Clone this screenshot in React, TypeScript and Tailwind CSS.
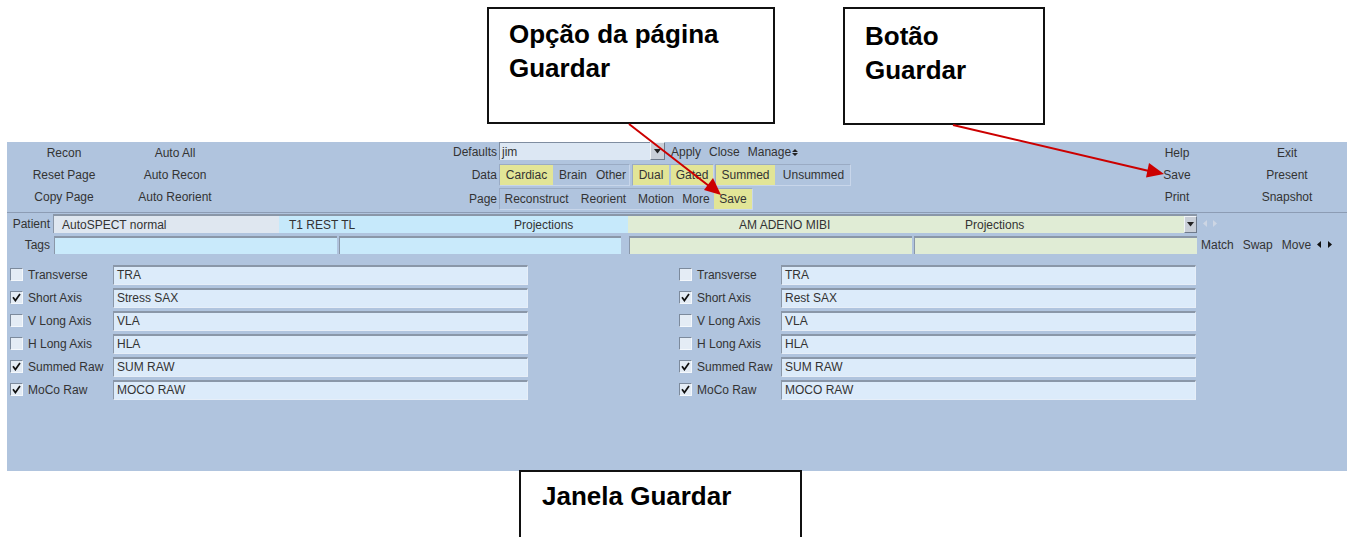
import React from "react";

const Check = () => (
  <svg width="9" height="9" viewBox="0 0 9 9" className="block">
    <path d="M1 4.2 L3.4 7.6 L8 1" fill="none" stroke="#111" strokeWidth="1.7" />
  </svg>
);

const CheckBox = ({ checked }: { checked: boolean }) => (
  <div className="w-[13px] h-[13px] bg-[#e4ecf5] border-t border-l border-t-[#7c8a9c] border-l-[#7c8a9c] border-b border-r border-b-[#f4f8fc] border-r-[#f4f8fc] flex items-center justify-center shrink-0">
    {checked ? <Check /> : null}
  </div>
);

const Field = ({ text, w, bg }: { text: string; w: string; bg: string }) => (
  <div className={`${w} ${bg} h-[20px] border-t-2 border-l border-t-[#8a97a8] border-l-[#8a97a8] border-b border-r border-b-[#e6eef8] border-r-[#e6eef8] pl-[3px] flex items-center`}>
    {text}
  </div>
);

const rows: { label: string; left: string; right: string; lc: boolean; rc: boolean }[] = [
  { label: "Transverse", left: "TRA", right: "TRA", lc: false, rc: false },
  { label: "Short Axis", left: "Stress SAX", right: "Rest SAX", lc: true, rc: true },
  { label: "V Long Axis", left: "VLA", right: "VLA", lc: false, rc: false },
  { label: "H Long Axis", left: "HLA", right: "HLA", lc: false, rc: false },
  { label: "Summed Raw", left: "SUM RAW", right: "SUM RAW", lc: true, rc: true },
  { label: "MoCo Raw", left: "MOCO RAW", right: "MOCO RAW", lc: true, rc: true },
];

const Btn = ({ children, w, y }: { children: React.ReactNode; w: string; y?: boolean }) => (
  <div className={`${w} h-[20px] flex items-center justify-center ${y ? "bg-[#e2e597]" : ""}`}>{children}</div>
);

const groupCls =
  "flex gap-[2px] border border-t-[#9aabc4] border-l-[#9aabc4] border-b-[#c8d6ea] border-r-[#c8d6ea]";

export default function App() {
  return (
    <div className="relative w-[1347px] h-[537px] bg-white overflow-hidden font-['Liberation_Sans',Arial,sans-serif]">
      {/* Application panel */}
      <div className="mt-[142px] ml-[7px] w-[1340px] h-[329px] bg-[#b0c4de] text-[12px] text-[#333333] leading-none">
        {/* Toolbar */}
        <div className="flex h-[70px]">
          <div className="grid grid-cols-[114px_108px] auto-rows-[22px] items-center text-center">
            <div>Recon</div>
            <div>Auto All</div>
            <div>Reset Page</div>
            <div>Auto Recon</div>
            <div>Copy Page</div>
            <div>Auto Reorient</div>
          </div>
          <div className="ml-[211px] flex flex-col">
            <div className="flex h-[22px] items-center">
              <div className="w-[57px] text-right mb-[3px]">Defaults</div>
              <div className="ml-[2px] flex h-[18px] mb-[4px]">
                <div className="w-[151px] h-full bg-[#dce7f3] border-t border-l border-[#7f8da0] pl-[2px] flex items-center">jim</div>
                <div className="w-[15px] h-full bg-[#c9cfd8] border border-t-[#f0f4f8] border-l-[#f0f4f8] border-b-[#6e7a8a] border-r-[#6e7a8a] flex items-center justify-center">
                  <svg width="7" height="5" viewBox="0 0 7 5"><path d="M0 0 H7 L3.5 4.5 Z" fill="#222" /></svg>
                </div>
              </div>
              <div className="ml-[6px] mb-[3px]">Apply</div>
              <div className="ml-[8px] mb-[3px]">Close</div>
              <div className="ml-[8px] mb-[3px] flex items-center">
                Manage
                <svg width="6" height="9" viewBox="0 0 6 9" className="ml-[1px] mt-[2px]">
                  <path d="M0 4 H6 L3 1 Z M0 5 H6 L3 8 Z" fill="#222" />
                </svg>
              </div>
            </div>
            <div className="flex h-[22px] items-center">
              <div className="w-[57px] text-right">Data</div>
              <div className={`ml-[2px] ${groupCls}`}>
                <Btn w="w-[53px]" y>Cardiac</Btn>
                <Btn w="w-[36px]">Brain</Btn>
                <Btn w="w-[36px]">Other</Btn>
              </div>
              <div className={`ml-[2px] ${groupCls}`}>
                <Btn w="w-[36px]" y>Dual</Btn>
                <Btn w="w-[42px]" y>Gated</Btn>
              </div>
              <div className={`ml-[1px] ${groupCls}`}>
                <Btn w="w-[59px]" y>Summed</Btn>
                <Btn w="w-[73px]">Unsummed</Btn>
              </div>
            </div>
            <div className="flex h-[26px] items-center">
              <div className="w-[57px] text-right">Page</div>
              <div className={`ml-[2px] ${groupCls}`}>
                <Btn w="w-[73px]">Reconstruct</Btn>
                <Btn w="w-[57px]">Reorient</Btn>
                <Btn w="w-[44px]">Motion</Btn>
                <Btn w="w-[32px]">More</Btn>
                <Btn w="w-[38px]" y>Save</Btn>
              </div>
            </div>
          </div>
          <div className="ml-auto mr-[5px] grid grid-cols-[110px_110px] auto-rows-[22px] items-center text-center">
            <div>Help</div>
            <div>Exit</div>
            <div>Save</div>
            <div>Present</div>
            <div>Print</div>
            <div>Snapshot</div>
          </div>
        </div>

        {/* Patient row */}
        <div className="flex h-[22px] items-center border-t border-t-[#8c9cb4]">
          <div className="w-[46px] text-right pr-[3px]">Patient</div>
          <div className="flex h-[19px] border-t-2 border-l border-t-[#8a97a8] border-l-[#8a97a8]">
            <div className="w-[225px] bg-[#dfe7f0] flex items-center pl-[8px]">AutoSPECT normal</div>
            <div className="w-[349px] bg-[#c6e9fb] flex items-center">
              <div className="w-[235px] pl-[10px]">T1 REST TL</div>
              <div>Projections</div>
            </div>
            <div className="w-[556px] bg-[#e0ecd5] flex items-center">
              <div className="w-[337px] pl-[111px]">AM ADENO MIBI</div>
              <div>Projections</div>
            </div>
            <div className="w-[13px] bg-[#c9cfd8] border border-t-[#f0f4f8] border-l-[#f0f4f8] border-b-[#6e7a8a] border-r-[#6e7a8a] flex items-center justify-center">
              <svg width="7" height="5" viewBox="0 0 7 5"><path d="M0 0 H7 L3.5 4.5 Z" fill="#222" /></svg>
            </div>
          </div>
          <div className="ml-[6px] flex items-center gap-[6px]">
            <svg width="4" height="7" viewBox="0 0 4 7"><path d="M4 0 V7 L0 3.5 Z" fill="#cdd6e4" /></svg>
            <svg width="4" height="7" viewBox="0 0 4 7"><path d="M0 0 V7 L4 3.5 Z" fill="#cdd6e4" /></svg>
          </div>
        </div>

        {/* Tags row */}
        <div className="flex h-[21px] items-center">
          <div className="w-[47px] text-right pr-[4px]">Tags</div>
          <div className="flex h-[18px]">
            <div className="w-[283px] bg-[#c9eafb] border-t-2 border-l border-t-[#8a97a8] border-l-[#8a97a8]" />
            <div className="ml-[2px] w-[282px] bg-[#c9eafb] border-t-2 border-l border-t-[#8a97a8] border-l-[#8a97a8]" />
            <div className="ml-[8px] w-[283px] bg-[#e0ecd5] border-t-2 border-l border-t-[#8a97a8] border-l-[#8a97a8]" />
            <div className="ml-[2px] w-[283px] bg-[#e0ecd5] border-t-2 border-l border-t-[#8a97a8] border-l-[#8a97a8]" />
          </div>
          <div className="ml-[4px]">Match</div>
          <div className="ml-[9px]">Swap</div>
          <div className="ml-[9px]">Move</div>
          <div className="ml-[6px] flex items-center gap-[7px]">
            <svg width="4" height="7" viewBox="0 0 4 7"><path d="M4 0 V7 L0 3.5 Z" fill="#111" /></svg>
            <svg width="4" height="7" viewBox="0 0 4 7"><path d="M0 0 V7 L4 3.5 Z" fill="#111" /></svg>
          </div>
        </div>

        {/* List */}
        <div className="pt-[8px] grid grid-cols-[669px_1fr] pl-[3px]">
          <div className="flex flex-col">
            {rows.map((r) => (
              <div key={"l" + r.label} className="flex h-[23px] items-center">
                <CheckBox checked={r.lc} />
                <div className="ml-[5px] w-[85px] whitespace-nowrap">{r.label}</div>
                <Field text={r.left} w="w-[415px]" bg="bg-[#dcebfa]" />
              </div>
            ))}
          </div>
          <div className="flex flex-col">
            {rows.map((r) => (
              <div key={"r" + r.label} className="flex h-[23px] items-center">
                <CheckBox checked={r.rc} />
                <div className="ml-[5px] w-[84px] whitespace-nowrap">{r.label}</div>
                <Field text={r.right} w="w-[415px]" bg="bg-[#dcebfa]" />
              </div>
            ))}
          </div>
        </div>
      </div>

      {/* Callout boxes */}
      <div className="absolute left-[487px] top-[7px] w-[288px] h-[117px] border-2 border-[#111] bg-white pl-[20px] pt-[8px] text-[26px] font-bold leading-[34px] text-black">
        <div>Opção da página</div>
        <div>Guardar</div>
      </div>
      <div className="absolute left-[843px] top-[7px] w-[202px] h-[118px] border-2 border-[#111] bg-white pl-[20px] pt-[10px] text-[26px] font-bold leading-[34px] text-black">
        <div>Botão</div>
        <div>Guardar</div>
      </div>
      <div className="absolute left-[519px] top-[470px] w-[283px] h-[80px] border-2 border-[#111] bg-white pl-[21px] pt-[7px] text-[26px] font-bold leading-[34px] text-black">
        <div>Janela Guardar</div>
      </div>

      {/* Arrows */}
      <svg className="absolute left-0 top-0 pointer-events-none" width="1347" height="537" viewBox="0 0 1347 537">
        <line x1="629" y1="124" x2="709" y2="186" stroke="#cc0000" strokeWidth="2" />
        <polygon points="721,195 704,190 713,178" fill="#cc0000" />
        <line x1="953" y1="125" x2="1149" y2="171" stroke="#cc0000" strokeWidth="2" />
        <polygon points="1164,174 1146,177.5 1149,163" fill="#cc0000" />
      </svg>
    </div>
  );
}
